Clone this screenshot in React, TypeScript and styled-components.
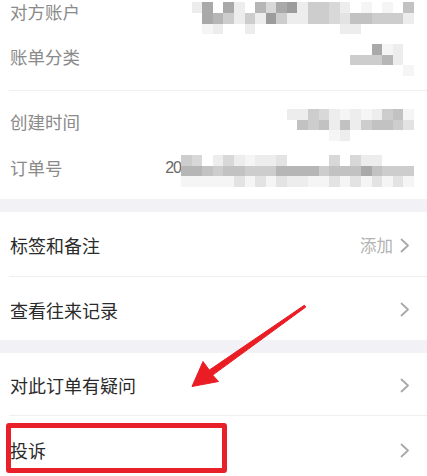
import React from 'react';
import styled, { createGlobalStyle, css } from 'styled-components';

const GlobalStyle = createGlobalStyle`
  html, body {
    margin: 0;
    padding: 0;
    background: #ffffff;
  }
  body {
    font-family: "Noto Sans CJK SC", "Noto Sans", "Liberation Sans", sans-serif;
    overflow: hidden;
  }
`;

const shades: Record<string, string> = {
  '0': 'transparent',
  '1': '#f5f5f5',
  '2': '#ededed',
  '3': '#e3e3e3',
  '4': '#d8d8d8',
  '5': '#cdcdcd',
  '6': '#c2c2c2',
  '7': '#b6b6b6',
  '8': '#a9a9a9',
  '9': '#9c9c9c',
};

const Page = styled.div`
  position: relative;
  width: 427px;
  height: 476px;
  overflow: hidden;
  background: #ffffff;
`;

const InfoSection = styled.section`
  padding-bottom: 8px;
`;

const InfoGroup = styled.div<{ $divided?: boolean }>`
  padding: ${(p) => (p.$divided ? '8px 0 0' : '0 0 10px')};
  margin-left: 9px;
  border-bottom: ${(p) => (p.$divided ? 'none' : '1px solid #efeff2')};
`;

const InfoValue = styled.div`
  display: flex;
  align-items: center;
  margin-top: 6px;
`;

// the first row is cut by the top of the screen, so it is shorter and top-aligned
const InfoRow = styled.div<{ $lead?: boolean }>`
  display: flex;
  align-items: center;
  justify-content: space-between;
  height: 46px;
  padding-right: 13px;
  box-sizing: border-box;

  ${(p) =>
    p.$lead &&
    css`
      height: 34px;
      align-items: flex-start;
      padding-top: 2px;

      ${InfoValue} {
        margin-top: 0;
      }
    `}
`;

const InfoLabel = styled.span`
  font-size: 17.5px;
  line-height: 20px;
  color: #8a8a8a;
  padding-left: 1px;
`;

const ValuePrefix = styled.span`
  font-family: "Liberation Sans", Arial, sans-serif;
  font-size: 16px;
  color: #6a6a6a;
  letter-spacing: -1px;
  margin-top: -6px;
`;

const Mosaic = styled.div<{ $cols: number }>`
  display: grid;
  grid-template-columns: repeat(${(p) => p.$cols}, 10.6px);
  grid-auto-rows: 10.8px;
  filter: blur(0.4px);
`;

const Cell = styled.span<{ $shade: string }>`
  background: ${(p) => shades[p.$shade]};
`;

const Band = styled.div`
  height: 13px;
  background: #f2f2f6;
`;

const ActionGroup = styled.div`
  background: #ffffff;
`;

const ActionRow = styled.div<{ $height: number }>`
  display: flex;
  align-items: center;
  justify-content: space-between;
  height: ${(p) => p.$height}px;
  padding: 2px 17px 0 10px;
  box-sizing: border-box;
`;

const ActionDivider = styled.div`
  height: 1px;
  margin-left: 9px;
  background: #efeff2;
`;

const ActionLabel = styled.span`
  font-size: 18px;
  color: #2b2b2b;
`;

const ActionTrail = styled.div`
  display: flex;
  align-items: center;
  gap: 7px;
`;

const TrailText = styled.span`
  font-size: 16.5px;
  color: #b2b2b2;
`;

const Chevron = styled.svg`
  width: 10px;
  height: 15px;
  display: block;
`;

const Overlay = styled.svg`
  position: absolute;
  inset: 0;
  pointer-events: none;
`;

const HighlightBox = styled.div`
  position: absolute;
  left: 6px;
  top: 423px;
  width: 221px;
  height: 50px;
  box-sizing: border-box;
  border: 5px solid #e8202a;
  border-radius: 3px;
  pointer-events: none;
`;

interface InfoItem {
  label: string;
  prefix?: string;
  mosaic: string[];
}

const topInfo: InfoItem[] = [
  {
    label: '对方账户',
    mosaic: [
      '280820748925542010106',
      '087525295225543665552',
      '012002000000002200000',
    ],
  },
  {
    label: '账单分类',
    mosaic: ['008120', '555720', '000001'],
  },
];

const bottomInfo: InfoItem[] = [
  {
    label: '创建时间',
    mosaic: ['225421212561', '065626256653', '000012000000'],
  },
  {
    label: '订单号',
    prefix: '20',
    mosaic: [
      '5402421223000040422000',
      '7765665557777566686555',
      '1111131313221131313131',
    ],
  },
];

interface ActionItem {
  label: string;
  trail?: string;
  height: number;
}

const actionGroups: ActionItem[][] = [
  [
    { label: '标签和备注', trail: '添加', height: 64 },
    { label: '查看往来记录', height: 63 },
  ],
  [
    { label: '对此订单有疑问', height: 62 },
    { label: '投诉', height: 66 },
  ],
];

const MosaicValue: React.FC<{ rows: string[] }> = ({ rows }) => (
  <Mosaic $cols={rows[0].length}>
    {rows.map((row, r) =>
      row.split('').map((s, c) => <Cell key={`${r}-${c}`} $shade={s} />)
    )}
  </Mosaic>
);

const InfoList: React.FC<{ items: InfoItem[]; lead?: boolean }> = ({ items, lead }) => (
  <>
    {items.map((item, i) => (
      <InfoRow key={item.label} $lead={lead && i === 0}>
        <InfoLabel>{item.label}</InfoLabel>
        <InfoValue>
          {item.prefix && <ValuePrefix>{item.prefix}</ValuePrefix>}
          <MosaicValue rows={item.mosaic} />
        </InfoValue>
      </InfoRow>
    ))}
  </>
);

const ChevronIcon = () => (
  <Chevron viewBox="0 0 10 15">
    <path d="M1.5 1.5 L8 7.5 L1.5 13.5" fill="none" stroke="#a8a8a8" strokeWidth="1.8" strokeLinecap="round" strokeLinejoin="round" />
  </Chevron>
);

export default function App() {
  return (
    <Page>
      <GlobalStyle />
      <InfoSection>
        <InfoGroup>
          <InfoList items={topInfo} lead />
        </InfoGroup>
        <InfoGroup $divided>
          <InfoList items={bottomInfo} />
        </InfoGroup>
      </InfoSection>

      {actionGroups.map((group, gi) => (
        <React.Fragment key={gi}>
          <Band />
          <ActionGroup>
            {group.map((item, i) => (
              <React.Fragment key={item.label}>
                {i > 0 && <ActionDivider />}
                <ActionRow $height={item.height}>
                  <ActionLabel>{item.label}</ActionLabel>
                  <ActionTrail>
                    {item.trail && <TrailText>{item.trail}</TrailText>}
                    <ChevronIcon />
                  </ActionTrail>
                </ActionRow>
              </React.Fragment>
            ))}
          </ActionGroup>
        </React.Fragment>
      ))}

      <Overlay width="427" height="476" viewBox="0 0 427 476">
        <polygon
          points="304.4,305.2 209.3,370.1 203,361.5 192,386.5 218.5,381.5 212.7,375.1 305.8,307"
          fill="#ea1c24"
          strokeLinejoin="round"
          stroke="#ea1c24"
          strokeWidth="1"
        />
      </Overlay>
      <HighlightBox />
    </Page>
  );
}
